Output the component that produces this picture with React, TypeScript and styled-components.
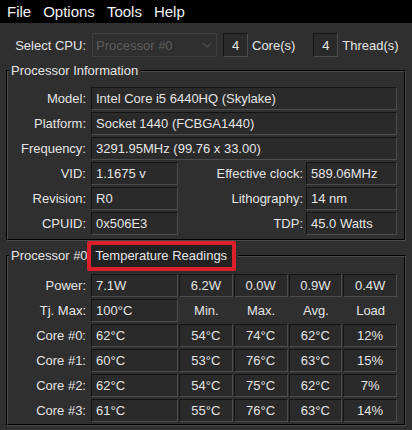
import React from "react";
import styled, { createGlobalStyle } from "styled-components";

const GlobalStyle = createGlobalStyle`
  html, body {
    margin: 0;
    padding: 0;
    background: #2f2f2f;
  }
  body {
    font-family: "Liberation Sans", Arial, sans-serif;
    font-size: 13px;
    color: #e4e4e4;
  }
`;

const Window = styled.div`
  width: 412px;
  height: 430px;
  background: #2f2f2f;
  overflow: hidden;
`;

const MenuBar = styled.div`
  height: 23px;
  background: #000;
  display: flex;
  align-items: center;
  gap: 12px;
  padding-left: 7px;
  font-size: 15px;
  color: #f2f2f2;
`;

const SelectRow = styled.div`
  display: flex;
  align-items: center;
  height: 24px;
  margin-top: 10px;
  padding-left: 6px;
`;

const RowLabel = styled.span`
  width: 80px;
  text-align: right;
  margin-right: 6px;
  white-space: nowrap;
`;

const CpuSelect = styled.div`
  width: 125px;
  height: 24px;
  box-sizing: border-box;
  border: 1px solid #3e3e3e;
  display: flex;
  align-items: center;
  justify-content: space-between;
  padding: 0 4px 0 3px;
  color: #5e5e5e;
`;

const CountBox = styled.div<{ $offset: number }>`
  width: 25px;
  height: 24px;
  box-sizing: border-box;
  margin-left: ${(p) => p.$offset}px;
  margin-right: 4px;
  border-top: 1px solid #141414;
  border-left: 1px solid #141414;
  border-bottom: 1px solid #4c4c4c;
  border-right: 1px solid #4c4c4c;
  background: #2a2a2a;
  display: flex;
  align-items: center;
  justify-content: center;
`;

const Group = styled.fieldset<{ $top: number; $bottom: number; $gap?: number }>`
  margin: ${(p) => p.$gap ?? 0}px 6px 0;
  border: 2px groove #4a4a4a;
  padding: ${(p) => p.$top}px 6px ${(p) => p.$bottom}px 1px;
  min-width: 0;
`;

const Legend = styled.legend`
  padding: 0 2px;
  margin: 0;
  display: flex;
  align-items: center;
  line-height: 16px;
`;

const Highlight = styled.span`
  border: 4px solid #dd1f2c;
  border-radius: 2px;
  background: #222;
  padding: 3px 5px 3px 5px;
  margin-left: -1px;
  line-height: 16px;
`;

const InfoGrid = styled.div`
  display: grid;
  grid-template-columns: 82px 88px 1fr 92px;
  grid-auto-rows: 23px;
  row-gap: 2px;
`;

const ReadingsGrid = styled.div`
  display: grid;
  grid-template-columns: 82px 88px repeat(4, 1fr);
  grid-auto-rows: 23px;
  row-gap: 2px;
`;

const Label = styled.div<{ $pad?: number }>`
  display: flex;
  align-items: center;
  justify-content: flex-end;
  padding-right: ${(p) => p.$pad ?? 5}px;
  white-space: nowrap;
`;

const Field = styled.div<{ $span?: number; $center?: boolean }>`
  grid-column: span ${(p) => p.$span ?? 1};
  box-sizing: border-box;
  margin-right: 1px;
  border-top: 1px solid #141414;
  border-left: 1px solid #141414;
  border-bottom: 1px solid #4c4c4c;
  border-right: 1px solid #4c4c4c;
  background: #2a2a2a;
  display: flex;
  align-items: center;
  justify-content: ${(p) => (p.$center ? "center" : "flex-start")};
  padding-left: ${(p) => (p.$center ? 0 : 4)}px;
  white-space: nowrap;
`;

const Header = styled.div`
  display: flex;
  align-items: center;
  justify-content: center;
`;

const Chevron = () => (
  <svg width="10" height="6" viewBox="0 0 10 6">
    <path d="M1 1 L5 5 L9 1" fill="none" stroke="#4a4a4a" strokeWidth="1.4" />
  </svg>
);

const cores = [
  { name: "Core #0:", now: "62°C", min: "54°C", max: "74°C", avg: "62°C", load: "12%" },
  { name: "Core #1:", now: "60°C", min: "53°C", max: "76°C", avg: "63°C", load: "15%" },
  { name: "Core #2:", now: "62°C", min: "54°C", max: "75°C", avg: "62°C", load: "7%" },
  { name: "Core #3:", now: "61°C", min: "55°C", max: "76°C", avg: "63°C", load: "14%" },
];

export default function App() {
  return (
    <Window>
      <GlobalStyle />
      <MenuBar>
        <span>File</span>
        <span>Options</span>
        <span>Tools</span>
        <span>Help</span>
      </MenuBar>

      <SelectRow>
        <RowLabel>Select CPU:</RowLabel>
        <CpuSelect>
          <span>Processor #0</span>
          <Chevron />
        </CpuSelect>
        <CountBox $offset={6}>4</CountBox>
        <span>Core(s)</span>
        <CountBox $offset={18}>4</CountBox>
        <span>Thread(s)</span>
      </SelectRow>

      <Group $top={8} $bottom={4} $gap={6}>
        <Legend>Processor Information</Legend>
        <InfoGrid>
          <Label>Model:</Label>
          <Field $span={3}>Intel Core i5 6440HQ (Skylake)</Field>
          <Label>Platform:</Label>
          <Field $span={3}>Socket 1440 (FCBGA1440)</Field>
          <Label>Frequency:</Label>
          <Field $span={3}>3291.95MHz (99.76 x 33.00)</Field>
          <Label>VID:</Label>
          <Field>1.1675 v</Field>
          <Label $pad={3}>Effective clock:</Label>
          <Field>589.06MHz</Field>
          <Label>Revision:</Label>
          <Field>R0</Field>
          <Label $pad={3}>Lithography:</Label>
          <Field>14 nm</Field>
          <Label>CPUID:</Label>
          <Field>0x506E3</Field>
          <Label $pad={3}>TDP:</Label>
          <Field>45.0 Watts</Field>
        </InfoGrid>
      </Group>

      <Group $top={3} $bottom={2}>
        <Legend>
          Processor #0
          <Highlight>Temperature Readings</Highlight>
        </Legend>
        <ReadingsGrid>
          <Label>Power:</Label>
          <Field>7.1W</Field>
          <Field $center>6.2W</Field>
          <Field $center>0.0W</Field>
          <Field $center>0.9W</Field>
          <Field $center>0.4W</Field>

          <Label>Tj. Max:</Label>
          <Field>100°C</Field>
          <Header>Min.</Header>
          <Header>Max.</Header>
          <Header>Avg.</Header>
          <Header>Load</Header>

          {cores.map((c) => (
            <React.Fragment key={c.name}>
              <Label>{c.name}</Label>
              <Field>{c.now}</Field>
              <Field $center>{c.min}</Field>
              <Field $center>{c.max}</Field>
              <Field $center>{c.avg}</Field>
              <Field $center>{c.load}</Field>
            </React.Fragment>
          ))}
        </ReadingsGrid>
      </Group>
    </Window>
  );
}
